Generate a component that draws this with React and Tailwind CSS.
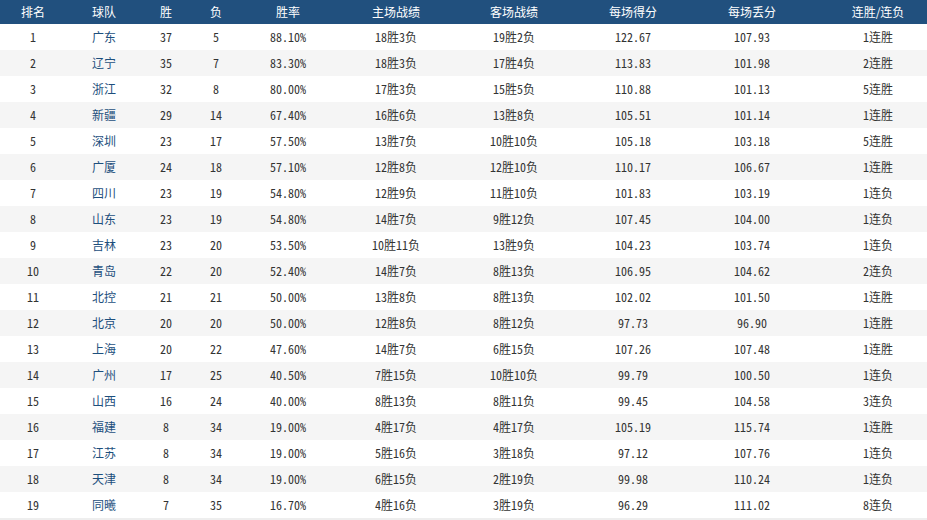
import React from "react";

const rows = [
  ["1", "广东", "37", "5", "88.10%", "18胜3负", "19胜2负", "122.67", "107.93", "1连胜"],
  ["2", "辽宁", "35", "7", "83.30%", "18胜3负", "17胜4负", "113.83", "101.98", "2连胜"],
  ["3", "浙江", "32", "8", "80.00%", "17胜3负", "15胜5负", "110.88", "101.13", "5连胜"],
  ["4", "新疆", "29", "14", "67.40%", "16胜6负", "13胜8负", "105.51", "101.14", "1连胜"],
  ["5", "深圳", "23", "17", "57.50%", "13胜7负", "10胜10负", "105.18", "103.18", "5连胜"],
  ["6", "广厦", "24", "18", "57.10%", "12胜8负", "12胜10负", "110.17", "106.67", "1连胜"],
  ["7", "四川", "23", "19", "54.80%", "12胜9负", "11胜10负", "101.83", "103.19", "1连负"],
  ["8", "山东", "23", "19", "54.80%", "14胜7负", "9胜12负", "107.45", "104.00", "1连负"],
  ["9", "吉林", "23", "20", "53.50%", "10胜11负", "13胜9负", "104.23", "103.74", "1连负"],
  ["10", "青岛", "22", "20", "52.40%", "14胜7负", "8胜13负", "106.95", "104.62", "2连负"],
  ["11", "北控", "21", "21", "50.00%", "13胜8负", "8胜13负", "102.02", "101.50", "1连胜"],
  ["12", "北京", "20", "20", "50.00%", "12胜8负", "8胜12负", "97.73", "96.90", "1连胜"],
  ["13", "上海", "20", "22", "47.60%", "14胜7负", "6胜15负", "107.26", "107.48", "1连胜"],
  ["14", "广州", "17", "25", "40.50%", "7胜15负", "10胜10负", "99.79", "100.50", "1连负"],
  ["15", "山西", "16", "24", "40.00%", "8胜13负", "8胜11负", "99.45", "104.58", "3连负"],
  ["16", "福建", "8", "34", "19.00%", "4胜17负", "4胜17负", "105.19", "115.74", "1连胜"],
  ["17", "江苏", "8", "34", "19.00%", "5胜16负", "3胜18负", "97.12", "107.76", "1连负"],
  ["18", "天津", "8", "34", "19.00%", "6胜15负", "2胜19负", "99.98", "110.24", "1连负"],
  ["19", "同曦", "7", "35", "16.70%", "4胜16负", "3胜19负", "96.29", "111.02", "8连负"],
];

const heads = ["排名", "球队", "胜", "负", "胜率", "主场战绩", "客场战绩", "每场得分", "每场丢分", "连胜/连负"];

const cols = "grid grid-cols-[66px_76px_48px_52px_92px_124px_112px_126px_112px_140px]";

export default function App() {
  return (
    <div className="w-[927px] h-[520px] overflow-hidden bg-white">
      <div className="w-[948px] font-['Noto_Sans_Mono_CJK_SC','Liberation_Mono','Noto_Sans_CJK_SC',monospace] text-[12px]">
        <div className={cols + " h-[24px] bg-[#21507e] text-white items-center font-['Noto_Sans_CJK_SC',sans-serif]"}>
          {heads.map((h) => (
            <div key={h} className="text-center leading-none">{h}</div>
          ))}
        </div>
        {rows.map((r, i) => (
          <div
            key={r[0]}
            className={cols + " h-[26px] items-center text-[#333] " + (i % 2 === 1 ? "bg-[#f5f5f5]" : "bg-white")}
          >
            {r.map((c, j) => (
              <div key={j} className={"text-center " + (j === 1 ? "text-[#1d4f7d]" : "")}>{c}</div>
            ))}
          </div>
        ))}
        <div className="h-[2px] bg-[#eeeeee]" />
      </div>
    </div>
  );
}
